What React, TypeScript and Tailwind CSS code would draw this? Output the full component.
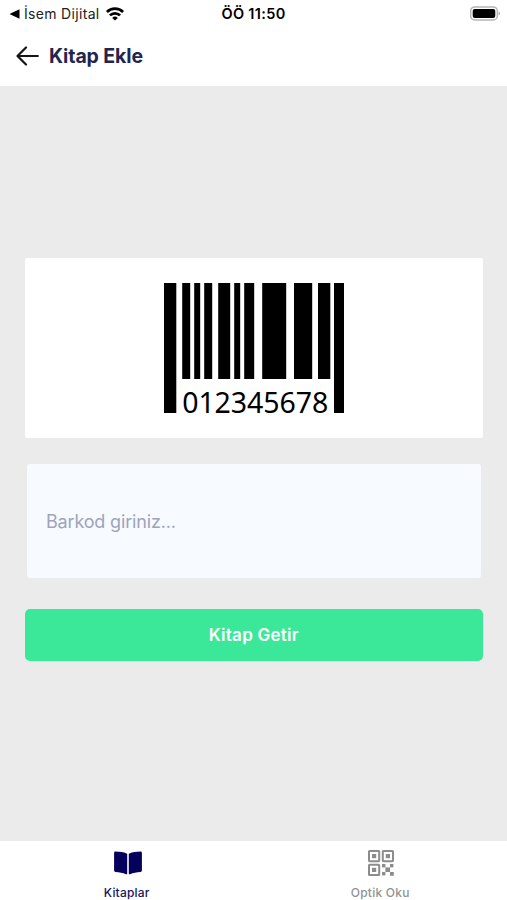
import React from "react";

const BARS: [number, number, number][] = [
  [0, 12.3, 130], [18.2, 8, 96], [30.2, 6, 96], [40.2, 8, 96], [54.2, 12, 96],
  [70.2, 6, 96], [80.2, 10, 96], [98.2, 24, 96], [130, 18.2, 96], [154, 12.3, 96], [170, 10, 130],
];

function Barcode() {
  return (
    <svg className="shrink-0" width="180" height="148" viewBox="0 0 180 148" role="img" aria-label="Barkod">
      {BARS.map(([x, w, h]) => (
        <rect key={x} x={x} y="0" width={w} height={h} fill="#000" />
      ))}
      <text x="18.2" y="129.5" fontFamily="'Noto Sans', sans-serif" fontSize="28.5" textLength="146">012345678</text>
    </svg>
  );
}

function WifiIcon() {
  return (
    <svg className="ml-[6px] shrink-0" width="18" height="14" viewBox="0 0 18 14" fill="none" stroke="#000" strokeWidth="2.7">
      <path d="M.9 5a11.400 11.400 0 0 1 16.200 0" />
      <path d="M3.900 8.400a7.200 7.200 0 0 1 10.200 0" />
      <path d="M9 13.600 6.200 10.900a4 4 0 0 1 5.600 0Z" fill="#000" stroke="none" />
    </svg>
  );
}

function BookIcon() {
  return (
    <svg width="28" height="24" viewBox="0 0 28 24" fill="#04005c">
      <path d="M13.200 3.100v19.300c0 .8-.7 1.100-1.300.8C9 21.700 5.300 21.100 1.500 20.900A1.400 1.400 0 0 1 .1 19.500V2A1.400 1.400 0 0 1 1.600.600C5.400.800 9.600 1.200 12.600 2.400c.4.100.6.300.6.700Z" />
      <path d="M14.800 3.100v19.300c0 .8.700 1.100 1.300.8 2.900-1.500 6.600-2.100 10.400-2.300a1.400 1.400 0 0 0 1.400-1.400V2A1.400 1.400 0 0 0 26.400.600C22.600.800 18.400 1.200 15.400 2.400c-.4.100-.6.300-.6.700Z" />
    </svg>
  );
}

function QrIcon() {
  return (
    <svg width="26" height="26" viewBox="0 0 26 26" fill="#8c8c8c">
      <g fill="none" stroke="#8c8c8c" strokeWidth="2">
        <rect x="1" y="1" width="10.200" height="10.200" rx=".6" />
        <rect x="14.800" y="1" width="10.200" height="10.200" rx=".6" />
        <rect x="1" y="14.800" width="10.200" height="10.200" rx=".6" />
      </g>
      <rect x="4" y="4" width="4.200" height="4.200" />
      <rect x="17.800" y="4" width="4.200" height="4.200" />
      <rect x="4" y="17.800" width="4.200" height="4.200" />
      <rect x="17.400" y="17.400" width="4.600" height="4.600" />
      <rect x="14" y="14" width="3.400" height="3.400" />
      <rect x="22" y="14" width="3.400" height="3.400" />
      <rect x="14" y="22" width="3.400" height="3.400" />
      <rect x="22" y="22" width="3.800" height="3.800" />
    </svg>
  );
}

export default function App() {
  return (
    <div className="flex h-[900px] w-[507px] flex-col overflow-hidden bg-[#ebebeb] font-['Inter',sans-serif]">
      <div className="flex h-[86px] flex-col bg-white">
        <div className="grid h-[27px] grid-cols-3 items-center px-[9px] text-black">
          <div className="flex items-center">
            <svg className="shrink-0" width="11" height="10" viewBox="0 0 11 10"><path d="M.5 5 10.500.3v9.400Z" /></svg>
            <span className="ml-[4px] whitespace-nowrap text-[14px] tracking-[0.32px] text-[#222]">İsem Dijital</span>
            <WifiIcon />
          </div>
          <span className="text-center text-[14.500px] font-semibold tracking-[0.32px]">ÖÖ 11:50</span>
          <svg className="-mr-[3px] justify-self-end" width="31" height="15" viewBox="0 0 31 15">
            <rect x=".7" y=".9" width="26.600" height="13" rx="4" fill="#fff" stroke="#b5b5b5" strokeWidth="1.500" />
            <rect x="2.700" y="2.900" width="22.600" height="9" rx="2" />
            <path d="M28.600 5.200c2 .8 2 3.600 0 4.400Z" fill="#aaa" />
          </svg>
        </div>
        <header className="flex h-[58px] items-center pl-[16px]">
          <svg width="24" height="20" viewBox="0 0 24 20" fill="none" stroke="#151515" strokeWidth="2.200" strokeLinecap="round" strokeLinejoin="round">
            <path d="M10 1.500 1.500 10l8.500 8.500M1.500 10h20.300" />
          </svg>
          <h1 className="ml-[9px] pt-[1px] text-[19.500px] font-bold tracking-[-0.1px] text-[#22254f]">Kitap Ekle</h1>
        </header>
      </div>

      <main className="flex flex-1 flex-col pt-[172px] pr-[24.500px] pl-[25px]">
        <div className="flex h-[180px] justify-center rounded-[2px] bg-white pt-[25px]">
          <Barcode />
        </div>
        <input
          className="mr-[1.500px] ml-[2px] mt-[26px] h-[114px] rounded-[3px] bg-[#f7faff] px-[19px] text-[18px] tracking-[-0.17px] outline-none placeholder:text-[#9da4bc] placeholder:opacity-100"
          placeholder="Barkod giriniz..."
        />
        <button className="mt-[31px] h-[52px] rounded-[5px] bg-[#3be89a] pt-[2px] text-[17px] font-semibold tracking-[0.25px] text-white">Kitap Getir</button>
      </main>

      <nav className="grid h-[59px] grid-cols-2 bg-white">
        <div className="flex flex-col items-center pt-[9px] text-[#17135f]">
          <div className="flex h-[26px] items-center pl-[2px]"><BookIcon /></div>
          <span className="mt-[9px] text-[12px] leading-[16px] font-medium tracking-[0.2px]">Kitaplar</span>
        </div>
        <div className="flex flex-col items-center pt-[9px] text-[#929292]">
          <div className="flex h-[26px] pl-[1px]"><QrIcon /></div>
          <span className="mt-[9px] text-[12px] leading-[16px] font-medium tracking-[0.25px]">Optik Oku</span>
        </div>
      </nav>
    </div>
  );
}
